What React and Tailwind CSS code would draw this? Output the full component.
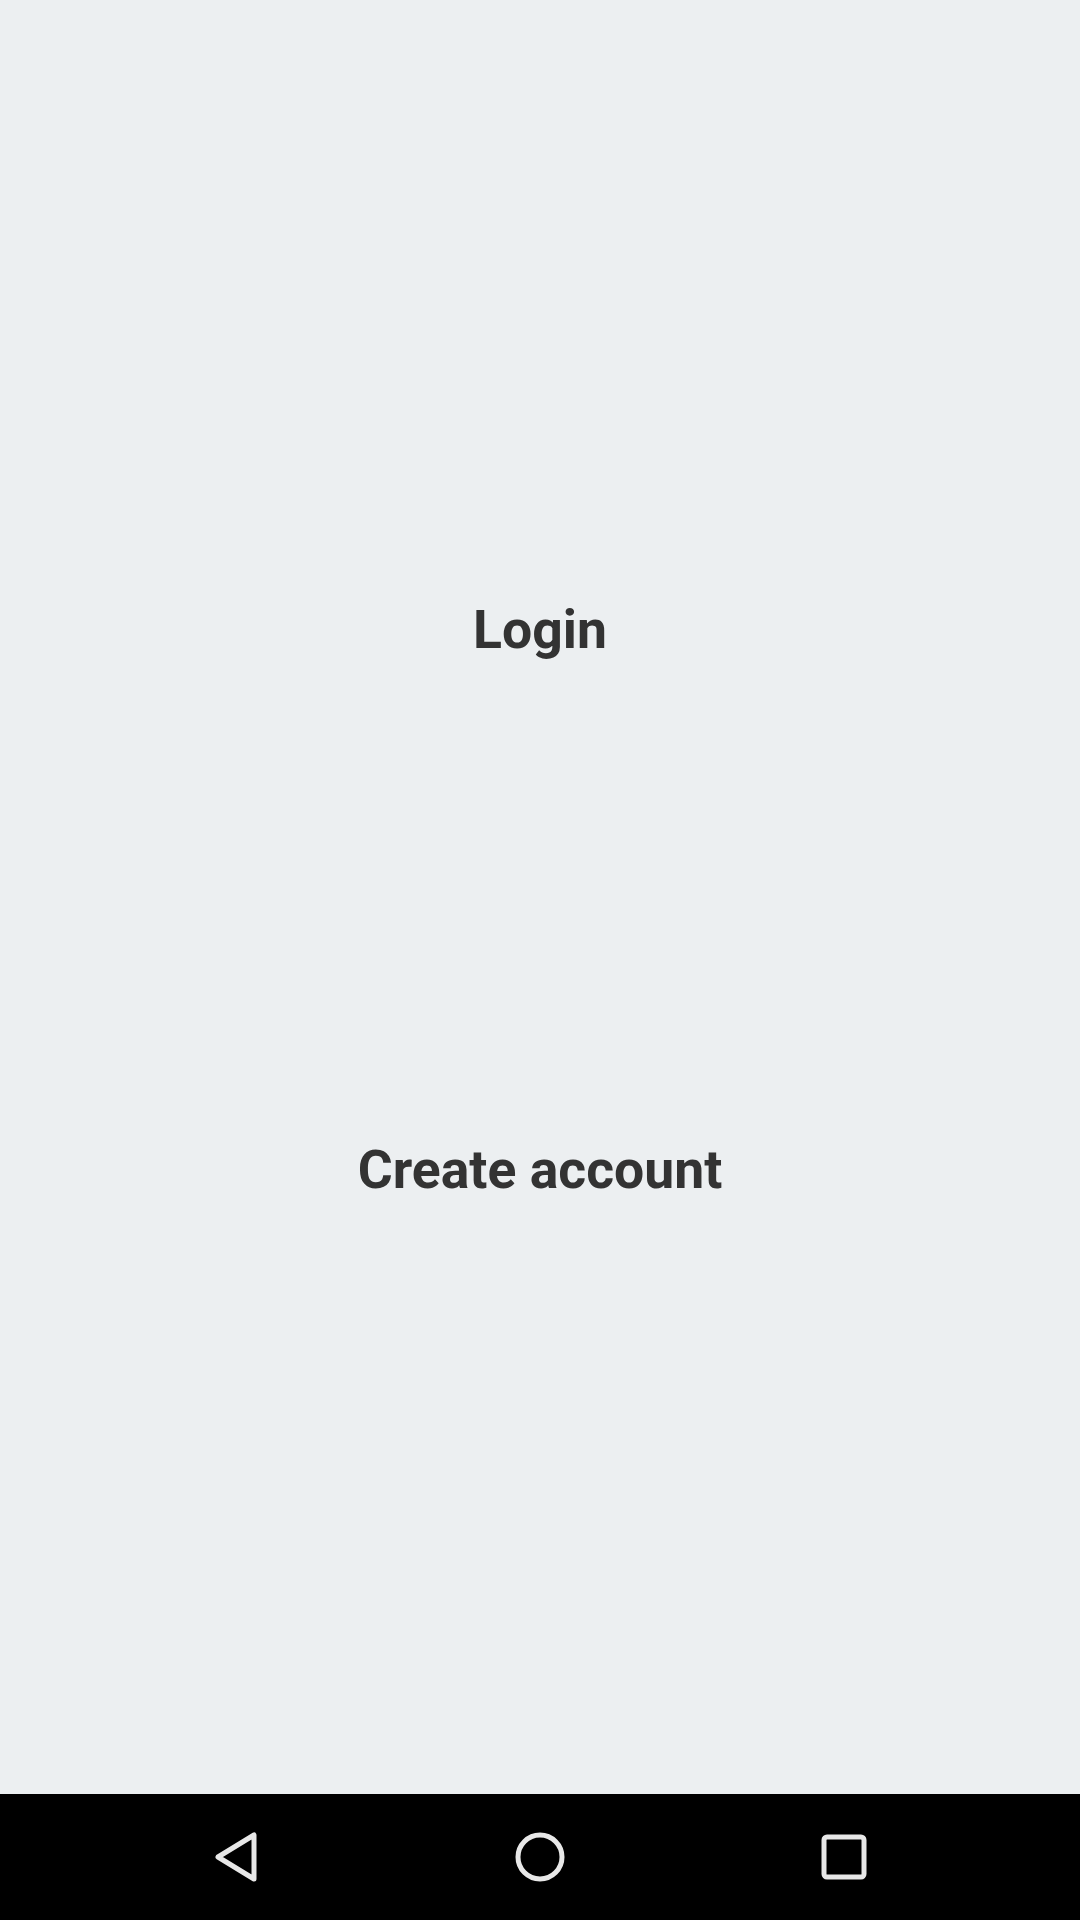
export default function App() {
  return (
    <div className="w-[1080px] h-[1920px] flex flex-col bg-[#eceff1]" style={{ fontFamily: 'Roboto, "Noto Sans", sans-serif' }}>
      <div className="flex-1 flex flex-col pt-[360px]">
        <div className="h-[540px] flex items-center justify-center">
          <span className="text-[53.5px] font-bold text-[#333333] leading-none">Login</span>
        </div>
        <div className="h-[540px] flex items-center justify-center">
          <span className="text-[53.5px] font-bold text-[#333333] leading-none">Create account</span>
        </div>
      </div>
      <div className="h-[126px] bg-black flex items-center justify-center">
        <div className="w-[304px] flex justify-center">
          <svg width="48" height="52" viewBox="0 0 48 52" fill="none">
            <path d="M42 4 L42 48 L6 26 Z" stroke="#e8e8e8" strokeWidth="5" strokeLinejoin="round" />
          </svg>
        </div>
        <div className="w-[304px] flex justify-center">
          <svg width="52" height="52" viewBox="0 0 52 52" fill="none">
            <circle cx="26" cy="26" r="22" stroke="#e8e8e8" strokeWidth="5" />
          </svg>
        </div>
        <div className="w-[304px] flex justify-center">
          <svg width="46" height="46" viewBox="0 0 46 46" fill="none">
            <rect x="3" y="3" width="40" height="40" rx="3" stroke="#e8e8e8" strokeWidth="5" />
          </svg>
        </div>
      </div>
    </div>
  );
}
